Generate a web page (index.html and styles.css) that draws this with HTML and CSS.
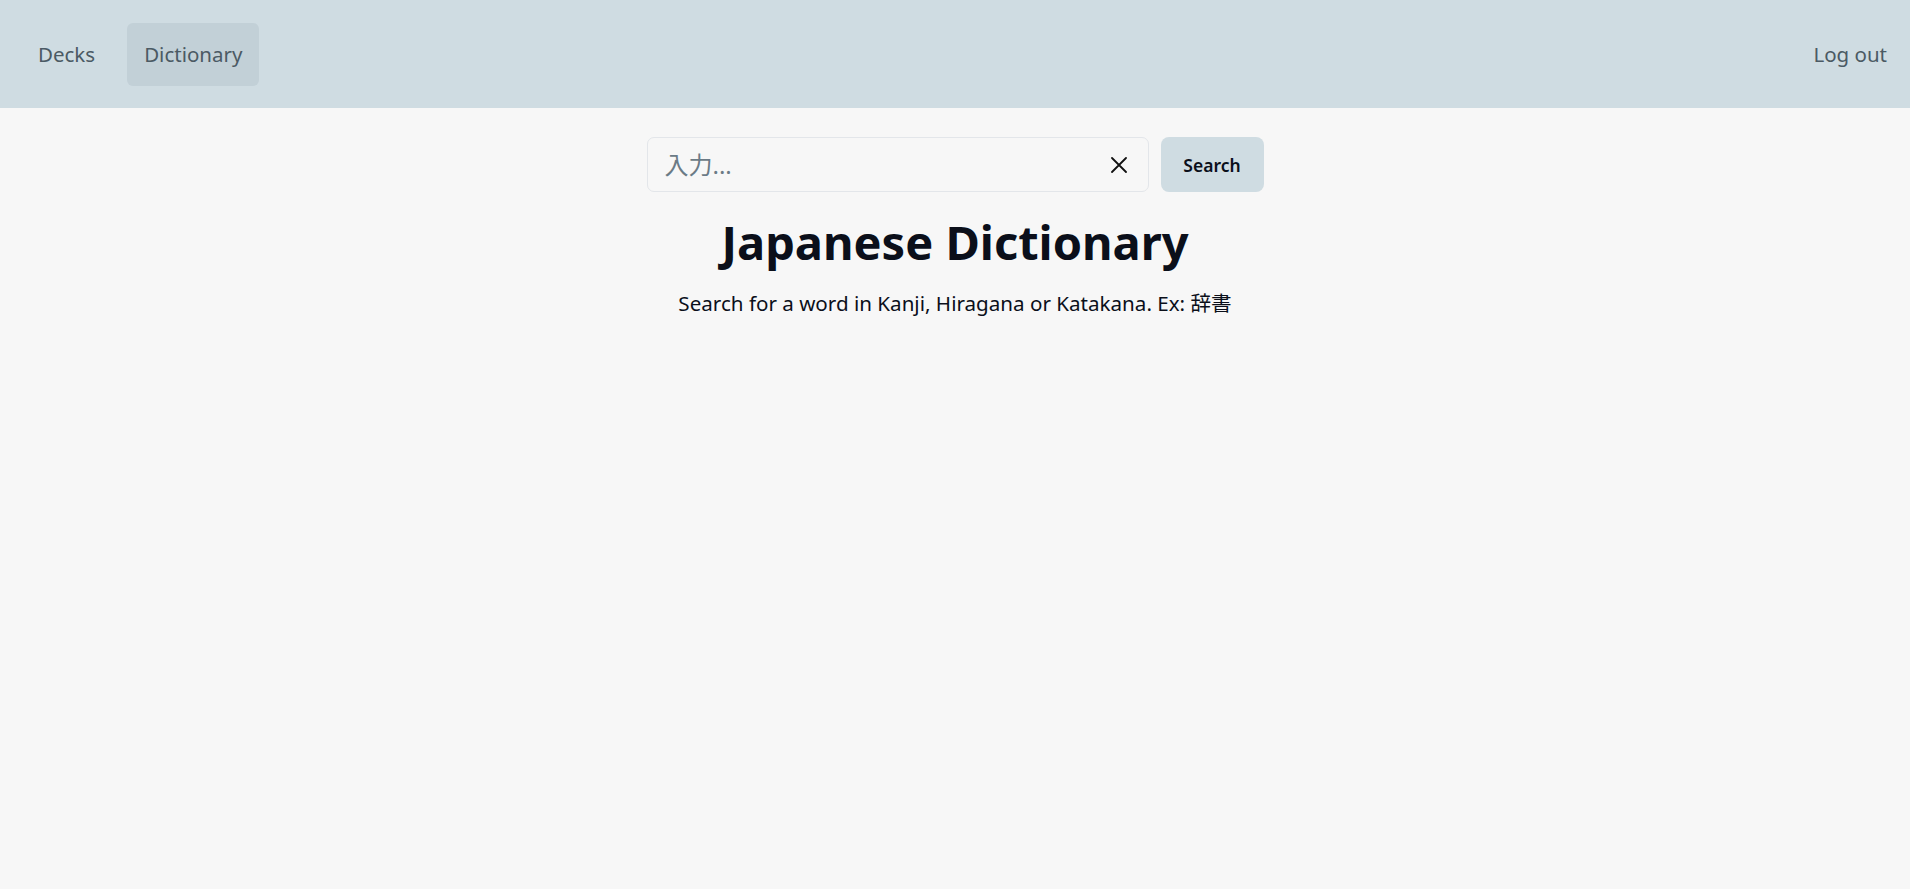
FILE: index.html
```html
<!DOCTYPE html>
<html lang="en">
<head>
<meta charset="utf-8">
<title>Japanese Dictionary</title>
<link rel="stylesheet" href="styles.css">
</head>
<body>
<nav class="nav">
  <div class="nav-left">
    <a class="nav-link" href="#">Decks</a>
    <a class="nav-link active" href="#">Dictionary</a>
  </div>
  <a class="nav-link logout" href="#">Log out</a>
</nav>
<main class="main">
  <form class="search-row">
    <div class="search-box">
      <input class="search-input" type="text" placeholder="入力...">
      <button class="clear-btn" type="button" aria-label="Clear">
        <svg width="16" height="16" viewBox="0 0 16 16"><path d="M1 1L15 15M15 1L1 15" stroke="#111" stroke-width="1.8" stroke-linecap="round"/></svg>
      </button>
    </div>
    <button class="search-btn" type="submit">Search</button>
  </form>
  <h1 class="title">Japanese Dictionary</h1>
  <p class="subtitle">Search for a word in Kanji, Hiragana or Katakana. Ex: 辞書</p>
</main>
</body>
</html>
```
FILE: styles.css
```css
* { box-sizing: border-box; }
html, body { margin: 0; padding: 0; }
body {
  background: #f7f7f7;
  font-family: "Noto Sans", "Noto Sans CJK JP", sans-serif;
  color: #0b0f1a;
  min-height: 889px;
}
.nav {
  height: 108px;
  background: #cfdce2;
  display: flex;
  align-items: center;
  justify-content: space-between;
  padding: 0 6px 0 21px;
}
.nav-left { display: flex; gap: 15px; align-items: center; }
.nav-link {
  display: flex;
  align-items: center;
  height: 63px;
  padding: 0 17px;
  border-radius: 6px;
  color: #4b5a64;
  text-decoration: none;
  font-size: 20.5px;
}
.nav-link.active { background: #c2d0d7; }
.main {
  display: flex;
  flex-direction: column;
  align-items: center;
  padding-top: 29px;
}
.search-row { display: flex; gap: 12px; margin: 0; }
.search-box {
  width: 502px;
  height: 55px;
  border: 1px solid #e3e6ea;
  border-radius: 7px;
  background: #f7f7f7;
  display: flex;
  align-items: center;
  padding: 0 19px 0 17px;
}
.search-input {
  flex: 1;
  border: none;
  background: transparent;
  outline: none;
  font-family: "Noto Sans", "Noto Sans CJK JP", sans-serif;
  font-size: 24px;
  color: #222;
  padding: 0;
  min-width: 0;
}
.search-input::placeholder { color: #6b7b86; }
.clear-btn {
  border: none;
  background: transparent;
  padding: 0;
  width: 20px;
  height: 20px;
  display: flex;
  align-items: center;
  justify-content: center;
}
.search-btn {
  width: 103px;
  height: 55px;
  border: none;
  border-radius: 8px;
  background: #cfdce2;
  font-family: "Noto Sans", "Noto Sans CJK JP", sans-serif;
  font-weight: 600;
  font-size: 17.5px;
  color: #0b0f1a;
  padding: 0;
}
.title {
  margin: 22px 0 0;
  font-size: 47px;
  font-weight: 700;
  line-height: 1.2;
  color: #0b0f1a;
}
.subtitle {
  margin: 17px 0 0;
  font-size: 20.6px;
  color: #0b0f1a;
}
```
